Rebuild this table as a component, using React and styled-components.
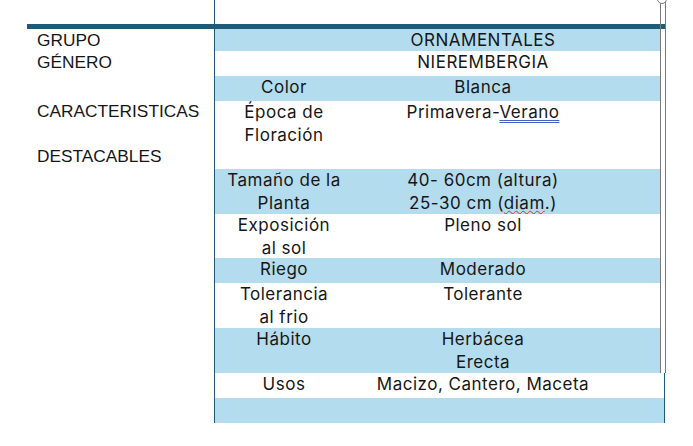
import React from 'react'
import styled, { createGlobalStyle } from 'styled-components'

const GlobalStyle = createGlobalStyle`
    html, body {
        margin: 0;
        padding: 0;
        background: #ffffff;
    }
    body {
        width: 693px;
        height: 446px;
        overflow: hidden;
        position: relative;
    }
`

const teal = '#1d5b79'
const blue = '#b3dcee'

const Page = styled.div`
    padding-left: 27px;
    width: 638px;
    color: #161616;
`

const TopGap = styled.div`
    height: 24px;
    width: 188px;
    box-sizing: border-box;
    border-right: 1px solid ${teal};
`

const Table = styled.div`
    display: grid;
    grid-template-columns: 188px 450px;
    border-top: 5px solid ${teal};
`

const LabelColumn = styled.div`
    box-sizing: border-box;
    border-right: 1px solid ${teal};
    padding-left: 10px;
    font-family: 'Liberation Sans', Arial, sans-serif;
    font-size: 17.3px;
    line-height: 22px;
`

const Label = styled.div`
    margin-top: ${(props) => props.$gap || 0}px;
`

const Details = styled.div`
    display: flex;
    flex-direction: column;
    font-family: Inter, 'Noto Sans', sans-serif;
    font-size: 17px;
    letter-spacing: 0.5px;
    line-height: 22.6px;
`

const Row = styled.div`
    display: grid;
    grid-template-columns: 138px 260px 1fr;
    box-sizing: border-box;
    height: ${(props) => props.$h}px;
    width: ${(props) => (props.$wide ? 450 : 445)}px;
    background: ${(props) => (props.$shaded ? blue : '#ffffff')};
    border-right: ${(props) => (props.$wide ? `1px solid ${teal}` : 'none')};
    padding-top: ${(props) => props.$top || 0}px;
`

const Cell = styled.div`
    text-align: center;
    white-space: nowrap;
`

const Grammar = styled.span`
    text-decoration: underline double #4a62c4;
    text-underline-offset: 2px;
    text-decoration-thickness: 1px;
`

const Spelling = styled.span`
    text-decoration: underline wavy #d9302a;
    text-underline-offset: 1px;
    text-decoration-thickness: 1px;
`

const ColumnMarker = styled.div`
    position: absolute;
    top: 0;
    left: 660px;
    width: 4px;
    height: 373px;
    border-left: 1px solid #7b7b7b;
    border-right: 1px solid #7b7b7b;
`

const MarkerHandle = styled.div`
    position: absolute;
    top: -6px;
    left: 657px;
    width: 10px;
    height: 10px;
    box-sizing: border-box;
    border: 1px solid #7b7b7b;
    border-radius: 50%;
    background: #ffffff;
`

const rows = [
    { h: 22, shaded: true, name: '', value: 'ORNAMENTALES' },
    { h: 25, name: '', value: 'NIEREMBERGIA', top: -1 },
    { h: 25, shaded: true, name: 'Color', value: 'Blanca' },
    {
        h: 68,
        name: ['Época de', 'Floración'],
        value: (
            <>
                Primavera-<Grammar>Verano</Grammar>
            </>
        ),
    },
    {
        h: 45,
        shaded: true,
        name: ['Tamaño de la', 'Planta'],
        value: [
            '40- 60cm (altura)',
            <>
                25-30 cm (<Spelling>diam</Spelling>.)
            </>,
        ],
    },
    { h: 44, name: ['Exposición', 'al sol'], value: 'Pleno sol' },
    { h: 25, shaded: true, name: 'Riego', value: 'Moderado' },
    { h: 45, name: ['Tolerancia', 'al frio'], value: 'Tolerante' },
    { h: 45, shaded: true, name: 'Hábito', value: ['Herbácea', 'Erecta'] },
    { h: 25, wide: true, name: 'Usos', value: 'Macizo, Cantero, Maceta' },
    { h: 25, wide: true, shaded: true, name: '', value: '' },
]

const Lines = ({ text }) =>
    Array.isArray(text) ? text.map((t, i) => <div key={i}>{t}</div>) : text

const App = () => {
    return (
        <>
            <GlobalStyle />
            <Page>
                <TopGap />
                <Table>
                    <LabelColumn>
                        <Label>GRUPO</Label>
                        <Label>GÉNERO</Label>
                        <Label $gap={27}>CARACTERISTICAS</Label>
                        <Label $gap={23}>DESTACABLES</Label>
                    </LabelColumn>
                    <Details>
                        {rows.map((row, i) => (
                            <Row
                                key={i}
                                $h={row.h}
                                $shaded={row.shaded}
                                $wide={row.wide}
                                $top={row.top}
                            >
                                <Cell>
                                    <Lines text={row.name} />
                                </Cell>
                                <Cell>
                                    <Lines text={row.value} />
                                </Cell>
                                <Cell />
                            </Row>
                        ))}
                    </Details>
                </Table>
            </Page>
            <ColumnMarker />
            <MarkerHandle />
        </>
    )
}

export default App
